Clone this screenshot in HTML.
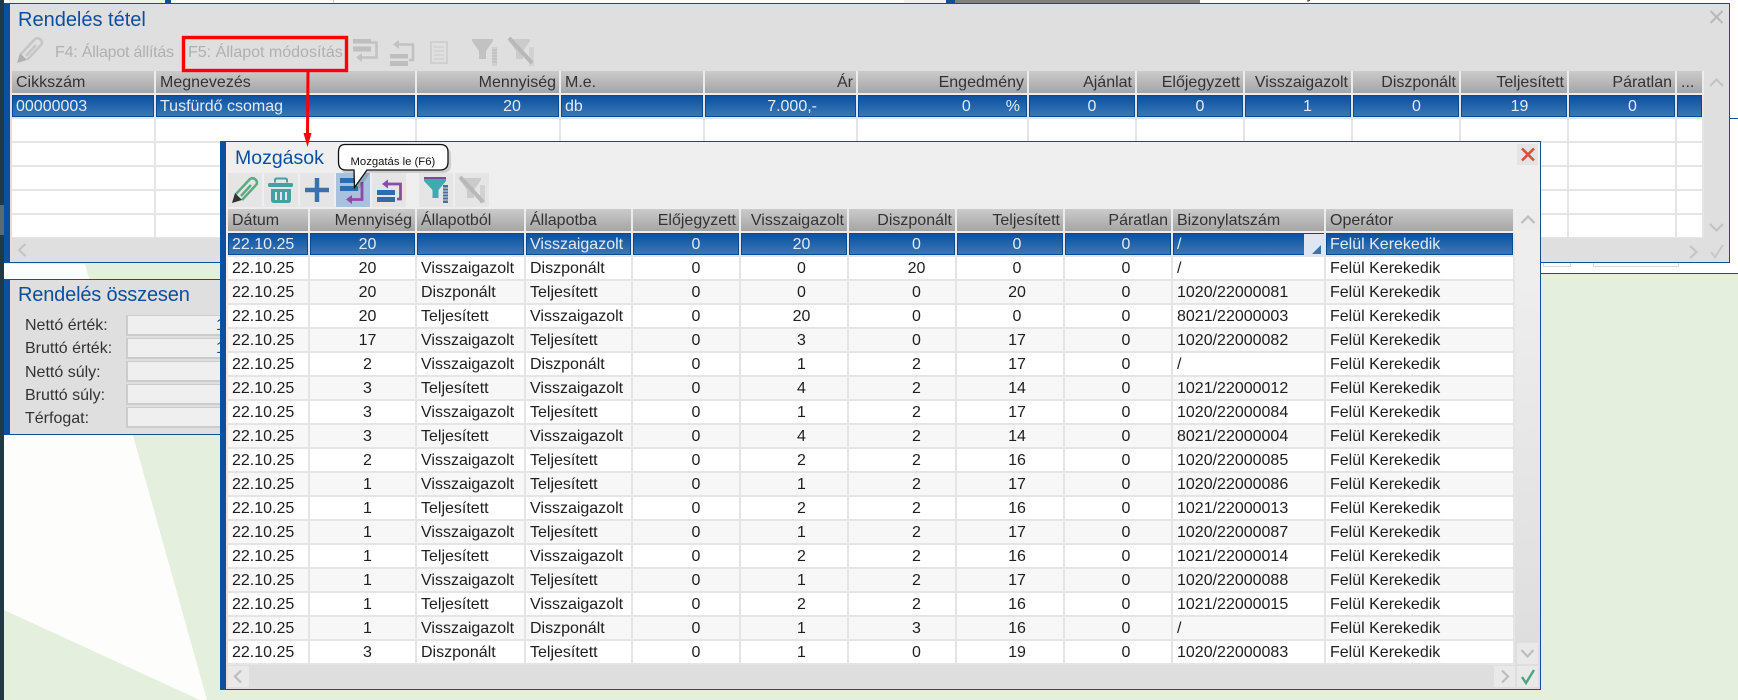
<!DOCTYPE html>
<html lang="hu"><head><meta charset="utf-8"><title>Mozgások</title>
<style>
html,body{margin:0;padding:0}
body{width:1738px;height:700px;position:relative;overflow:hidden;background:#e4efde;font:16px "Liberation Sans",Arial,sans-serif;color:#222}
.a{position:absolute}
table{position:absolute;border-collapse:separate;border-spacing:0;table-layout:fixed;font:16px "Liberation Sans",Arial,sans-serif}
td,th{height:24px;box-sizing:border-box;padding:2px 3px 0 4px;border-right:2px solid #e5e5e5;border-bottom:2px solid #e5e5e5;white-space:nowrap;overflow:hidden;font-weight:normal;text-align:left;color:#1e1e1e;background:#fff;line-height:20px}
th{background:linear-gradient(#cbcbcb,#a5a5a5);color:#333;border-right-color:#ececec;border-bottom-color:#ececec}
th.r{text-align:right}
tr.s td{background:linear-gradient(#0a4f9f,#3c7ab7);color:#e4ebf4;box-shadow:inset 0 0 0 1px #0a4a94}
#m tbody tr:nth-child(odd) td{background:#f7f7f7}
#m tbody tr.s td{background:linear-gradient(#0a4f9f,#3c7ab7)}
#m td:nth-child(2){text-align:center;padding:2px 0 0 10px}
#m td:nth-child(5){text-align:center;padding:2px 0 0 20px}
#m td:nth-child(6){text-align:center;padding:2px 0 0 15px}
#m td:nth-child(7){text-align:center;padding:2px 0 0 29px}
#m td:nth-child(8){text-align:center;padding:2px 0 0 14px}
#m td:nth-child(9){text-align:center;padding:2px 0 0 16px}
#t td.c{text-align:center}
.title{position:absolute;font-size:20px;color:#0b4f9e;line-height:24px;white-space:nowrap}
.lbl{position:absolute;left:25px;color:#333;line-height:22px;white-space:nowrap}
.inp{position:absolute;left:126px;width:300px;height:21px;box-sizing:border-box;background:#efefef;border:1px solid #ccc;border-width:1px 1px 2px 2px}
.one{position:absolute;left:216px;color:#0b4f9e;line-height:22px}
.btn{position:absolute;width:34px;height:34px;background:#e5e5e5}
.sb{position:absolute;width:21px;height:21px;background:#e9e9e9}
.tb{position:absolute;color:#b0b0b0;line-height:22px;white-space:nowrap}
.clip{position:absolute;top:0;height:3px;overflow:hidden;white-space:nowrap;color:#333;line-height:18px}
.clip span{position:relative;top:-15px;display:block}
</style></head>
<body>
<!-- background -->
<div class="a" style="left:0;top:0;width:4px;height:700px;background:#1f3a44"></div>
<div class="a" style="left:0;top:205px;width:4px;height:30px;background:#5b6a70"></div>
<svg class="a" style="left:0;top:0" width="1738" height="700"><polygon points="4,264 85,264 207,700 200,700 4,610" fill="#fdfefc"/></svg>
<div class="a" style="left:4px;top:0;width:1734px;height:4px;background:#fff"></div>
<div class="a" style="left:9px;top:0;width:156px;height:3px;background:#eef3e7"></div>
<div class="a" style="left:165px;top:0;width:6px;height:3px;background:#0b4f9e"></div>
<div class="clip" style="left:188px;width:40px"><span>Név:</span></div>
<div class="clip" style="left:1222px;width:110px"><span>Kedvezmény:</span></div>
<div class="a" style="left:333px;top:0;width:1px;height:3px;background:#ccc"></div>
<div class="a" style="left:904px;top:0;width:42px;height:3px;background:#f0f0f0"></div>
<div class="a" style="left:946px;top:0;width:9px;height:3px;background:#0b4f9e"></div>
<div class="a" style="left:955px;top:0;width:245px;height:3px;background:#808080"></div>
<div class="a" style="left:1541px;top:0;width:197px;height:273px;background:#fff"></div>
<div class="a" style="left:1730px;top:118px;width:8px;height:1px;background:#0b4f9e"></div>
<div class="a" style="left:1541px;top:273px;width:197px;height:1px;background:#0b4f9e"></div>
<div class="a" style="left:1543px;top:263px;width:28px;height:4px;box-sizing:border-box;border:1px solid #d8d8d8;border-top:0"></div>
<div class="a" style="left:1593px;top:263px;width:86px;height:4px;box-sizing:border-box;border:1px solid #d8d8d8;border-top:0"></div>

<!-- Rendelés tétel -->
<div class="a" style="left:4px;top:3px;width:1726px;height:260px;box-sizing:border-box;background:#dfdfdf;border:1px solid #0b4f9e;border-left:6px solid #0b4f9e"></div>
<div class="title" style="left:18px;top:8px">Rendelés tétel</div>
<div class="tb" style="left:55px;top:42px;letter-spacing:-.2px">F4: Állapot állítás</div>
<div class="tb" style="left:188px;top:42px">F5: Állapot módosítás</div>
<div class="a" style="left:12px;top:71px;width:1692px;height:167px;overflow:hidden">
<table id="t" style="left:0;top:0;width:1692px">
<colgroup><col style="width:144px"><col style="width:261px"><col style="width:144px"><col style="width:144px"><col style="width:153px"><col style="width:171px"><col style="width:108px"><col style="width:108px"><col style="width:108px"><col style="width:108px"><col style="width:108px"><col style="width:108px"><col style="width:27px"></colgroup>
<thead><tr><th>Cikkszám</th><th>Megnevezés</th><th class="r">Mennyiség</th><th>M.e.</th><th class="r">Ár</th><th class="r">Engedmény</th><th class="r">Ajánlat</th><th class="r">Előjegyzett</th><th class="r">Visszaigazolt</th><th class="r">Diszponált</th><th class="r">Teljesített</th><th class="r">Páratlan</th><th>...</th></tr></thead>
<tbody>
<tr class="s"><td>00000003</td><td>Tusfürdő csomag</td><td class="c" style="padding:2px 0 0 48px">20</td><td>db</td><td style="text-align:right;padding-right:39px">7.000,-</td><td style="text-align:right;padding-right:7px"><span style="margin-right:35px">0</span>%</td><td class="c" style="padding:2px 0 0 20px">0</td><td class="c" style="padding:2px 0 0 20px">0</td><td class="c" style="padding:2px 0 0 19px">1</td><td class="c" style="padding:2px 0 0 21px">0</td><td class="c" style="padding:2px 0 0 11px">19</td><td class="c" style="padding:2px 0 0 21px">0</td><td></td></tr>
<tr><td></td><td></td><td></td><td></td><td></td><td></td><td></td><td></td><td></td><td></td><td></td><td></td><td></td></tr>
<tr><td></td><td></td><td></td><td></td><td></td><td></td><td></td><td></td><td></td><td></td><td></td><td></td><td></td></tr>
<tr><td></td><td></td><td></td><td></td><td></td><td></td><td></td><td></td><td></td><td></td><td></td><td></td><td></td></tr>
<tr><td></td><td></td><td></td><td></td><td></td><td></td><td></td><td></td><td></td><td></td><td></td><td></td><td></td></tr>
<tr><td></td><td></td><td></td><td></td><td></td><td></td><td></td><td></td><td></td><td></td><td></td><td></td><td></td></tr>
</tbody></table></div>

<!-- Rendelés összesen -->
<div class="a" style="left:4px;top:279px;width:400px;height:156px;box-sizing:border-box;background:#dfdfdf;border:1px solid #0b4f9e;border-left:6px solid #0b4f9e"></div>
<div class="title" style="left:18px;top:283px;letter-spacing:-.17px">Rendelés összesen</div>
<div class="lbl" style="top:315px">Nettó érték:</div><div class="inp" style="top:315px"></div><div class="one" style="top:315px">1</div>
<div class="lbl" style="top:338px">Bruttó érték:</div><div class="inp" style="top:338px"></div><div class="one" style="top:338px">1</div>
<div class="lbl" style="top:362px">Nettó súly:</div><div class="inp" style="top:361px"></div>
<div class="lbl" style="top:385px">Bruttó súly:</div><div class="inp" style="top:384px"></div>
<div class="lbl" style="top:408px">Térfogat:</div><div class="inp" style="top:407px"></div>

<!-- Mozgások -->
<div class="a" style="left:220px;top:141px;width:1321px;height:549px;box-sizing:border-box;background:linear-gradient(#efefef 0,#eeeeee 25%,#dedede 92%);border:1px solid #0b4f9e;border-left:6px solid #0b4f9e"></div>
<div class="title" style="left:235px;top:146px;font-size:19.5px">Mozgások</div>
<div class="btn" style="left:228px;top:173px"></div>
<div class="btn" style="left:264px;top:173px"></div>
<div class="btn" style="left:300px;top:173px"></div>
<div class="btn" style="left:336px;top:173px;background:#a7c1de"></div>
<div class="btn" style="left:372px;top:173px"></div>
<div class="btn" style="left:419px;top:173px"></div>
<div class="btn" style="left:455px;top:173px"></div>
<div class="sb" style="left:1517px;top:144px;background:#e4e4e4"></div>
<div class="sb" style="left:1518px;top:209px;background:#ececec"></div>
<div class="sb" style="left:1517px;top:643px"></div>
<div class="sb" style="left:1494px;top:666px"></div>
<div class="sb" style="left:1517px;top:666px"></div>
<div class="sb" style="left:228px;top:666px"></div>
<table id="m" style="left:228px;top:209px;width:1287px">
<colgroup><col style="width:82px"><col style="width:107px"><col style="width:109px"><col style="width:107px"><col style="width:108px"><col style="width:108px"><col style="width:108px"><col style="width:108px"><col style="width:108px"><col style="width:153px"><col style="width:189px"></colgroup>
<thead><tr><th>Dátum</th><th class="r">Mennyiség</th><th>Állapotból</th><th>Állapotba</th><th class="r">Előjegyzett</th><th class="r">Visszaigazolt</th><th class="r">Diszponált</th><th class="r">Teljesített</th><th class="r">Páratlan</th><th>Bizonylatszám</th><th>Operátor</th></tr></thead>
<tbody>
<tr class="s"><td>22.10.25</td><td>20</td><td></td><td>Visszaigazolt</td><td>0</td><td>20</td><td>0</td><td>0</td><td>0</td><td>/</td><td>Felül Kerekedik</td></tr>
<tr><td>22.10.25</td><td>20</td><td>Visszaigazolt</td><td>Diszponált</td><td>0</td><td>0</td><td>20</td><td>0</td><td>0</td><td>/</td><td>Felül Kerekedik</td></tr>
<tr><td>22.10.25</td><td>20</td><td>Diszponált</td><td>Teljesített</td><td>0</td><td>0</td><td>0</td><td>20</td><td>0</td><td>1020/22000081</td><td>Felül Kerekedik</td></tr>
<tr><td>22.10.25</td><td>20</td><td>Teljesített</td><td>Visszaigazolt</td><td>0</td><td>20</td><td>0</td><td>0</td><td>0</td><td>8021/22000003</td><td>Felül Kerekedik</td></tr>
<tr><td>22.10.25</td><td>17</td><td>Visszaigazolt</td><td>Teljesített</td><td>0</td><td>3</td><td>0</td><td>17</td><td>0</td><td>1020/22000082</td><td>Felül Kerekedik</td></tr>
<tr><td>22.10.25</td><td>2</td><td>Visszaigazolt</td><td>Diszponált</td><td>0</td><td>1</td><td>2</td><td>17</td><td>0</td><td>/</td><td>Felül Kerekedik</td></tr>
<tr><td>22.10.25</td><td>3</td><td>Teljesített</td><td>Visszaigazolt</td><td>0</td><td>4</td><td>2</td><td>14</td><td>0</td><td>1021/22000012</td><td>Felül Kerekedik</td></tr>
<tr><td>22.10.25</td><td>3</td><td>Visszaigazolt</td><td>Teljesített</td><td>0</td><td>1</td><td>2</td><td>17</td><td>0</td><td>1020/22000084</td><td>Felül Kerekedik</td></tr>
<tr><td>22.10.25</td><td>3</td><td>Teljesített</td><td>Visszaigazolt</td><td>0</td><td>4</td><td>2</td><td>14</td><td>0</td><td>8021/22000004</td><td>Felül Kerekedik</td></tr>
<tr><td>22.10.25</td><td>2</td><td>Visszaigazolt</td><td>Teljesített</td><td>0</td><td>2</td><td>2</td><td>16</td><td>0</td><td>1020/22000085</td><td>Felül Kerekedik</td></tr>
<tr><td>22.10.25</td><td>1</td><td>Visszaigazolt</td><td>Teljesített</td><td>0</td><td>1</td><td>2</td><td>17</td><td>0</td><td>1020/22000086</td><td>Felül Kerekedik</td></tr>
<tr><td>22.10.25</td><td>1</td><td>Teljesített</td><td>Visszaigazolt</td><td>0</td><td>2</td><td>2</td><td>16</td><td>0</td><td>1021/22000013</td><td>Felül Kerekedik</td></tr>
<tr><td>22.10.25</td><td>1</td><td>Visszaigazolt</td><td>Teljesített</td><td>0</td><td>1</td><td>2</td><td>17</td><td>0</td><td>1020/22000087</td><td>Felül Kerekedik</td></tr>
<tr><td>22.10.25</td><td>1</td><td>Teljesített</td><td>Visszaigazolt</td><td>0</td><td>2</td><td>2</td><td>16</td><td>0</td><td>1021/22000014</td><td>Felül Kerekedik</td></tr>
<tr><td>22.10.25</td><td>1</td><td>Visszaigazolt</td><td>Teljesített</td><td>0</td><td>1</td><td>2</td><td>17</td><td>0</td><td>1020/22000088</td><td>Felül Kerekedik</td></tr>
<tr><td>22.10.25</td><td>1</td><td>Teljesített</td><td>Visszaigazolt</td><td>0</td><td>2</td><td>2</td><td>16</td><td>0</td><td>1021/22000015</td><td>Felül Kerekedik</td></tr>
<tr><td>22.10.25</td><td>1</td><td>Visszaigazolt</td><td>Diszponált</td><td>0</td><td>1</td><td>3</td><td>16</td><td>0</td><td>/</td><td>Felül Kerekedik</td></tr>
<tr><td>22.10.25</td><td>3</td><td>Diszponált</td><td>Teljesített</td><td>0</td><td>1</td><td>0</td><td>19</td><td>0</td><td>1020/22000083</td><td>Felül Kerekedik</td></tr>
</tbody></table>
<div class="a" style="left:1304px;top:234px;width:21px;height:21px;background:#dfe6f2"></div>

<!-- icons, annotations, tooltip -->
<svg class="a" style="left:0;top:0" width="1738" height="700" fill="none">
 <!-- outer toolbar: pencil -->
 <g stroke="#c6c6c6" stroke-width="2.5"><path d="M21 54 L35 39 Q38 37 41 40 Q43 43 41 45 L27 60"/><path d="M26 56 L36 45"/></g>
 <path d="M17 63 L20 53 L27 60 Z" fill="#b0b0b0"/>
 <!-- outer: move down -->
 <g fill="#bebebe"><rect x="353" y="39" width="18" height="4.5"/><rect x="353" y="46.5" width="18" height="5"/></g>
 <path d="M370 42.5 H376.5 V57.5 H360" stroke="#c2c2c2" stroke-width="2.6"/><path d="M356 57.5 L362 53 V62 Z" fill="#c2c2c2"/>
 <!-- outer: move up -->
 <g fill="#bebebe"><rect x="390" y="54" width="18" height="4.5"/><rect x="390" y="61" width="18" height="5"/></g>
 <path d="M397 44.5 H413 V60 H409" stroke="#c2c2c2" stroke-width="2.6"/><path d="M393 44.5 L399 40 V49 Z" fill="#c2c2c2"/>
 <!-- outer: doc -->
 <rect x="431" y="42" width="16" height="21" stroke="#d0d0d0" stroke-width="2"/>
 <path d="M434 47 H444 M434 51 H444 M434 55 H444 M434 59 H444" stroke="#d0d0d0" stroke-width="1.6"/>
 <!-- outer: filter -->
 <path d="M472 39 H493 V41 L486 51 V59 H479 V51 L472 41 Z" fill="#c2c2c2"/>
 <rect x="492" y="47" width="5" height="19" fill="#cfcfcf"/><path d="M492 50 H497 M492 53 H497 M492 56 H497 M492 59 H497 M492 62 H497" stroke="#b5b5b5"/>
 <!-- outer: filter x -->
 <path d="M509 39 H530 V41 L523 51 V59 H516 V51 L509 41 Z" fill="#cbcbcb"/>
 <rect x="529" y="47" width="5" height="19" fill="#d2d2d2"/>
 <path d="M509 38 L532 63" stroke="#b8b8b8" stroke-width="4"/>
 <!-- outer: close + scroll -->
 <path d="M1710.5 11 L1722.5 23 M1722.5 11 L1710.5 23" stroke="#b8b8b8" stroke-width="2"/>
 <path d="M1710 86 L1716.5 79.5 L1723 86 M1710 224 L1716.5 230.5 L1723 224 M1690 246 L1696.5 252 L1690 258 M25.5 244 L19 250 L25.5 256" stroke="#c4c4c4" stroke-width="2.2"/>
 <path d="M1711 252 L1715 257 L1723 245" stroke="#c8c8c8" stroke-width="2"/>

 <!-- Mozgások: pencil -->
 <g stroke="#5bab80" stroke-width="2.5"><path d="M236 194 L250 179 Q253 177 256 180 Q258 183 256 185 L242 200"/><path d="M241 196 L251 185"/></g>
 <path d="M232 203 L235 193 L242 200 Z" fill="#333"/>
 <!-- trash -->
 <path d="M275 182.5 V180 Q275 178.5 277 178.5 H285 Q287 178.5 287 180 V182.5" stroke="#45a0a3" stroke-width="2"/>
 <rect x="268" y="183" width="25" height="4" rx="1.5" fill="#45a0a3"/>
 <path d="M271 189 H291 V200 Q291 203 288 203 H274 Q271 203 271 200 Z" fill="#45a0a3"/>
 <path d="M276 192 V200 M281 192 V200 M286 192 V200" stroke="#e5e5e5" stroke-width="2"/>
 <!-- plus -->
 <path d="M305 190 H329 M317 178 V202" stroke="#3a72ae" stroke-width="4.5"/>
 <!-- move down -->
 <g fill="#2f6cae"><rect x="340" y="178" width="18" height="5"/><rect x="340" y="186" width="18" height="5"/></g>
 <path d="M362 182 V199.5 H351" stroke="#8e4aa8" stroke-width="2.8"/><path d="M346 199.5 L352 195 V204 Z" fill="#8e4aa8"/>
 <!-- move up -->
 <g fill="#2f6cae"><rect x="377" y="190" width="18" height="5"/><rect x="377" y="197" width="18" height="5"/></g>
 <path d="M387 184 H400.5 V199 H397" stroke="#8e4aa8" stroke-width="2.8"/><path d="M382 184 L388 179.5 V188.5 Z" fill="#8e4aa8"/>
 <!-- filter -->
 <rect x="424" y="177" width="22" height="2" fill="#7a4a9e"/>
 <path d="M424 179 H446 V181 L438.5 190 V198 H432.5 V190 L424 181 Z" fill="#40aab0"/>
 <rect x="443" y="185" width="5" height="18" fill="#4f6d92"/><path d="M443 188 H448 M443 191 H448 M443 194 H448 M443 197 H448 M443 200 H448" stroke="#cfdbe8"/>
 <!-- filter x -->
 <path d="M460 178 H481 V180 L474 190 V198 H467 V190 L460 180 Z" fill="#cbcbcb"/>
 <rect x="480" y="185" width="5" height="18" fill="#d2d2d2"/>
 <path d="M460 177 L483 202" stroke="#b8b8b8" stroke-width="4"/>
 <!-- red x -->
 <path d="M1522 148.5 L1534 160.5 M1534 148.5 L1522 160.5" stroke="#d9503a" stroke-width="2.6"/>
 <!-- cell widget -->
 <path d="M1321 245 V254 H1312 Z" fill="#3a72ae"/>
 <!-- scroll chevrons -->
 <path d="M1521.5 223 L1528 216.5 L1534.5 223 M1521.5 650 L1527.5 656.5 L1533.5 650 M1502 670.5 L1508 676.5 L1502 682.5 M241 670.5 L235 676.5 L241 682.5" stroke="#bdbdbd" stroke-width="2.2"/>
 <path d="M1522 677 L1526 683 L1534 670" stroke="#4aa77c" stroke-width="2.4"/>

 <!-- red box + arrow -->
 <rect x="183.5" y="37.5" width="163" height="33" stroke="#f00" stroke-width="3.4"/>
 <path d="M308 71 L307.5 134" stroke="#f00" stroke-width="3"/>
 <path d="M303.5 133 H311.5 L307.5 147 Z" fill="#f00"/>

 <!-- tooltip -->
 <path d="M345 147 H442 Q451 147 451 155 V165 Q451 173 442 173 H370 L358 191 L356 173 H345 Q341 173 341 165 V155 Q341 147 345 147 Z" fill="#000" opacity=".14"/>
 <path d="M345 144.5 H440 Q448 144.5 448 152 V162 Q448 170 440 170 H367 L354.5 187.5 L354 170 H346 Q338.5 170 338.5 162 V152 Q338.5 144.5 345 144.5 Z" fill="#fff" stroke="#111" stroke-width="1.3"/>
 <text x="350.5" y="165" font-family="Liberation Sans, Arial, sans-serif" font-size="11.3" fill="#111">Mozgatás le (F6)</text>
</svg>
</body></html>
